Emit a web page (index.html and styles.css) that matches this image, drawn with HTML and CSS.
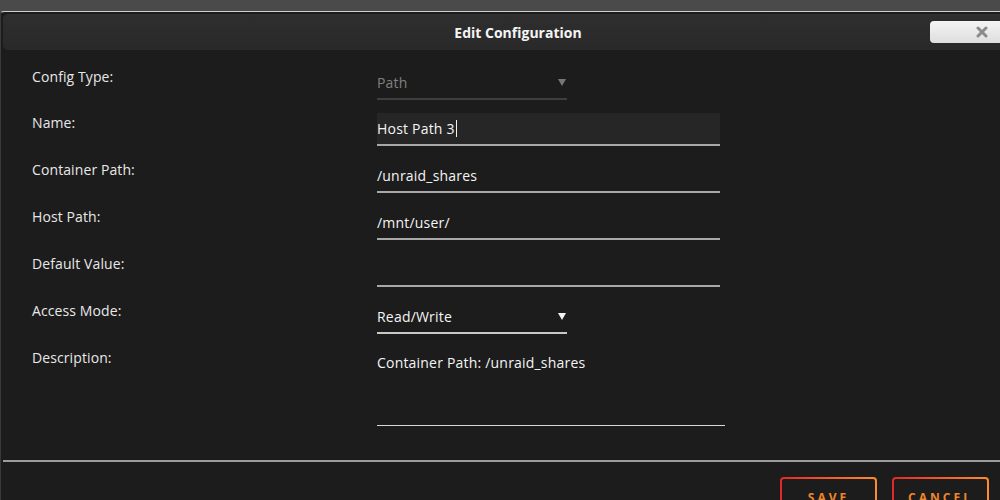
FILE: index.html
```html
<!DOCTYPE html>
<html lang="en">
<head>
    <meta charset="UTF-8">
    <meta name="viewport" content="width=device-width, initial-scale=1.0">
    <title>Edit Configuration</title>
    <link rel="stylesheet" href="styles.css">
</head>
<body>
    <div class="dialog">
        <div class="titlebar">
            <span class="title">Edit Configuration</span>
            <button class="close-btn" aria-label="Close">
                <svg width="12" height="12" viewBox="0 0 12 12">
                    <path d="M2 2 L10 10 M10 2 L2 10" stroke="#8a8a8a" stroke-width="3" stroke-linecap="round"/>
                </svg>
            </button>
        </div>

        <div class="form">
            <div class="row first">
                <label class="label">Config Type:</label>
                <div class="select disabled">
                    <span>Path</span>
                    <svg class="arrow" width="8" height="8" viewBox="0 0 8 8"><path d="M0 1 H8 L4 8 Z" fill="#777"/></svg>
                </div>
            </div>
            <div class="row">
                <label class="label">Name:</label>
                <div class="input focused">Host Path 3<span class="caret"></span></div>
            </div>
            <div class="row">
                <label class="label">Container Path:</label>
                <div class="input">/unraid_shares</div>
            </div>
            <div class="row">
                <label class="label">Host Path:</label>
                <div class="input">/mnt/user/</div>
            </div>
            <div class="row">
                <label class="label">Default Value:</label>
                <div class="input"></div>
            </div>
            <div class="row">
                <label class="label">Access Mode:</label>
                <div class="select">
                    <span>Read/Write</span>
                    <svg class="arrow" width="8" height="8" viewBox="0 0 8 8"><path d="M0 1 H8 L4 8 Z" fill="#f2f2f2"/></svg>
                </div>
            </div>
            <div class="row">
                <label class="label">Description:</label>
                <div class="textarea">Container Path: /unraid_shares</div>
            </div>
        </div>

        <div class="footer">
            <button class="btn">SAVE</button>
            <button class="btn">CANCEL</button>
        </div>
    </div>
</body>
</html>
```

FILE: styles.css
```css
* {
    margin: 0;
    padding: 0;
    box-sizing: border-box;
}

body {
    font-family: 'Open Sans', 'DejaVu Sans', sans-serif;
    background: linear-gradient(#4a4a4a, #424242);
    overflow: hidden;
    height: 500px;
}

.dialog {
    margin-top: 11px;
    width: 1036px;
    height: 520px;
    background: #1c1c1c;
    border-top: 1px solid #d0d0d0;
    border-left: 1px solid #3a3a3a;
    border-radius: 4px 4px 0 0;
    padding: 2px 3px 0 2px;
}

.titlebar {
    position: relative;
    height: 36px;
    background: linear-gradient(#2e2e2e, #292929);
    border-radius: 5px;
    display: flex;
    align-items: center;
    justify-content: center;
}

.title {
    color: #f4f4f4;
    font-size: 14px;
    font-weight: bold;
}

.close-btn {
    position: absolute;
    right: 0;
    top: 7px;
    width: 103px;
    height: 22px;
    border: none;
    border-radius: 4px;
    background: linear-gradient(#f4f4f4, #dedede);
    display: flex;
    align-items: center;
    justify-content: center;
}

.form {
    padding: 17px 0 0 29px;
}

.row {
    display: flex;
    align-items: flex-start;
    margin-bottom: 14px;
}

.row.first {
    margin-bottom: 13px;
}

.label {
    width: 345px;
    color: #e8e8e8;
    font-size: 14px;
    line-height: 20px;
    letter-spacing: 0.1px;
}

.input,
.select,
.textarea {
    color: #f4f4f4;
    font-size: 14px;
    line-height: 20px;
    letter-spacing: 0.2px;
    padding: 6px 0 5px;
    height: 33px;
}

.input {
    width: 343px;
    border-bottom: 2px solid #a8a8a8;
}

.input.focused {
    background: #262626;
}

.caret {
    display: inline-block;
    width: 1px;
    height: 17px;
    background: #f0f0f0;
    vertical-align: -3px;
    margin-left: 1px;
}

.select {
    width: 190px;
    border-bottom: 2px solid #c8c8c8;
    display: flex;
    align-items: center;
    justify-content: space-between;
    padding-right: 1px;
}

.select.disabled {
    color: #808080;
    border-bottom-color: #3e3e3e;
}

.arrow {
    margin-top: -2px;
}

.textarea {
    width: 348px;
    height: 78px;
    padding-top: 5px;
    border-bottom: 1px solid #d8d8d8;
}

.footer {
    margin-top: 34px;
    border-top: 2px solid #9c9c9c;
    padding-top: 15px;
    display: flex;
    justify-content: flex-end;
    gap: 15px;
    padding-right: 44px;
}

.btn {
    width: 97px;
    height: 40px;
    border: 2px solid transparent;
    border-radius: 4px;
    background: linear-gradient(#1c1c1c, #1c1c1c) padding-box,
                linear-gradient(90deg, #e22828, #ff8c2f) border-box;
    color: #f0862a;
    font-family: 'Open Sans', 'DejaVu Sans', sans-serif;
    font-size: 12px;
    font-weight: bold;
    letter-spacing: 3px;
    line-height: 14px;
    padding-top: 1px;
}
```
